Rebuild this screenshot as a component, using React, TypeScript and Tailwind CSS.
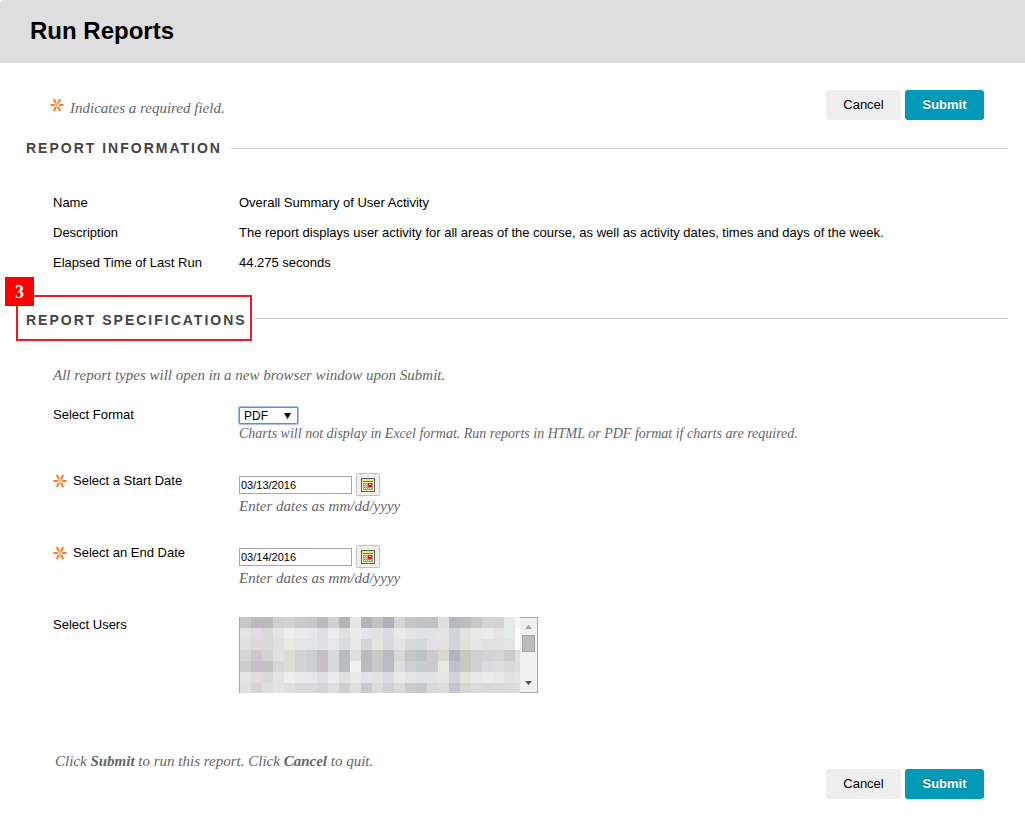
import { ReactNode, useState } from 'react'

// average colour of each 11px block of the blurred user list
const MOSAIC = [
  'c8c8c8 c0b8c0 bababa d0d0d4 d3d3d0 c9cbca c6c8cc bfb7c0 ced2d1 b2b4b6 e6e6e4 b2b4ba c4c3be b0b0ba d4d5d7 c6c6c6 bfc3c6 c1c0c4 e0dfda b4b8c0 bebdb9 c8c8c5 d4d5da d5d3d1 e8ebec f6f6f6',
  'e4e4e4 e2dce2 d9d9d9 e4e4e4 eef0ef ebebe9 e8e9ee e2dde3 ebecee e0e0e0 ebebeb e3e4ea e3e2e0 dadbe0 eaeaea e3e4e5 e0e3e5 e2e2e5 e5e4e4 d3d4da e4e4e0 e9e9e9 ececec e5e5e6 e6ebec ffffff',
  'e0e0e0 ddd9da d9d9d9 e2dfe2 e9eae6 e4e5e4 e3e4e5 e2dfe3 e6e8e8 d9dbdc e9e9e9 d5d5d5 e5e5e2 d9dae0 e5e6e4 d9d9db d5d8d9 e2e0e2 e3e1e1 d1d3d9 e1e2de e6e6e6 e1e1e1 e0e2e1 e5e5e2 fcfcfc',
  'd5d7d6 cdc6ce d2d2d0 e3e1e6 dddeda d0d3d2 cccfd4 c7bfc8 d7d9dc b8bdc0 e0e0dd bbbcc2 cac9c5 b9b9c3 d6d8d6 c6c6c5 bdc2c5 cdcacc d9d9d2 b0b5bf c8c7c2 cfd1ce d3d4da d5d5d6 cacbce e0e0e0',
  'cdcdcd c6bfc7 c2c2c2 d7d7dc dddeda d0d3d2 cccfd4 c7bfc8 d7d9dc b8bdc0 f0f0f0 bbbcc2 cac9c5 b9b9c3 dcdde0 d0ced3 c9cbcf cdcacc e8e8e3 bec1cc c8c7c2 cfd1ce dadbe1 dfdddc d8dad6 dedede',
  'e4e4e4 e2dce2 d9d9d9 e4e4e4 eef0ef ebebe9 e8e9ee e2dde3 ebecee e0e0e0 e9e9e9 e3e4ea e3e2e0 dadbe0 eaeaea e3e4e5 e0e3e5 e2e2e5 e5e4e4 d3d4da e4e4e0 e9e9e9 ececec e9e9e9 e0e3e1 e6e6e6',
  'e0e0e0 d7d5d6 dededc e5e4e4 e0e1de d9dbda d8d9db d9d2da dddedd cecece dfdfdf c9c9c9 dbdbd8 cfd0d6 dbdbdb cacbca c4c8c7 d9d8db dddddb c3c6d1 d7d6d1 dcdcdc d8dad8 dadada dadcd9 dddddd',
].map((row) => row.split(' '))

function Asterisk() {
  return (
    <svg
      width="14"
      height="14"
      viewBox="0 0 14 14"
      stroke="#ff7a24"
      strokeWidth="2"
      fill="none"
      className="shrink-0"
      aria-hidden="true"
    >
      <path d="M0.5 7H4.8M9.2 7H13.5M3.8 1L6 5.2M10.2 1L8 5.2M3.8 13L6 8.8M10.2 13L8 8.8" />
      <path d="M4.8 7L6 5.2L8 8.8M9.2 7L8 5.2L6 8.8" strokeWidth="1" stroke="#ffa468" />
    </svg>
  )
}

function CalendarIcon() {
  return (
    <svg width="14" height="14" viewBox="0 0 14 14" shapeRendering="crispEdges">
      <rect width="14" height="14" fill="#626055" />
      <rect x="1" y="1" width="12" height="12" fill="#fff3bd" />
      <rect x="1" y="1" width="12" height="2" fill="#f8de83" />
      <rect x="2" y="3" width="10" height="1" fill="#77735f" />
      <rect x="2" y="5" width="10" height="7" fill="#a5a18c" />
      {[6, 8, 10].map((y) =>
        [3, 5, 7, 9].map((x) => (
          <rect key={`${x}-${y}`} x={x} y={y} width="1" height="1" fill="#fffbe2" />
        ))
      )}
      <rect x="7" y="5" width="4" height="4" fill="#e0141a" />
      <rect x="8" y="6" width="2" height="1" fill="#ffffff" />
    </svg>
  )
}

function Buttons() {
  return (
    <div className="flex gap-1 text-[13px]">
      <button
        type="button"
        className="h-[30px] w-[75px] rounded-[3px] bg-[#eeeeee] text-black"
      >
        Cancel
      </button>
      <button
        type="submit"
        className="h-[30px] w-[79px] rounded-[3px] bg-[#0099b8] font-bold text-white [text-shadow:0_-1px_0_#00607a]"
      >
        Submit
      </button>
    </div>
  )
}

function Row({
  label,
  htmlFor,
  required,
  children,
}: {
  label: string
  htmlFor: string
  required?: boolean
  children: ReactNode
}) {
  return (
    <div className="flex">
      <div className="flex h-5 w-[186px] shrink-0 items-center gap-[6px]">
        {required && <Asterisk />}
        <label htmlFor={htmlFor}>{label}</label>
      </div>
      <div className="min-w-0 flex-1 pt-[2px]">{children}</div>
    </div>
  )
}

function Hint({ small, children }: { small?: boolean; children: ReactNode }) {
  return (
    <p
      className={`font-['Liberation_Serif'] leading-5 text-[#666666] italic ${
        small ? 'text-sm' : 'text-[15px]'
      }`}
    >
      {children}
    </p>
  )
}

function DateRow({ id, label, value }: { id: string; label: string; value: string }) {
  const [date, setDate] = useState(value)

  return (
    <Row label={label} htmlFor={id} required>
      <div className="flex h-[23px] items-center gap-1">
        <input
          id={id}
          type="text"
          value={date}
          onChange={(e) => setDate(e.target.value)}
          className="h-[18px] w-[113px] border border-[#a5a5a5] px-px text-[11px]"
        />
        <button
          type="button"
          aria-label={`${label} calendar`}
          className="grid h-[23px] w-6 place-content-center rounded-[2px] border border-[#c4c4c4] bg-[#efefef]"
        >
          <CalendarIcon />
        </button>
      </div>
      <Hint>Enter dates as mm/dd/yyyy</Hint>
    </Row>
  )
}

function UserList() {
  return (
    <div className="relative h-[76px] w-[299px] border border-[#a9a9a9]">
      <select
        id="users"
        multiple
        className="block h-full w-full overflow-hidden"
      />
      {/* Blurred names */}
      <svg
        width="280"
        height="76"
        viewBox="0 0 280 76"
        shapeRendering="crispEdges"
        className="pointer-events-none absolute -top-px left-0"
        aria-hidden="true"
      >
        {MOSAIC.map((row, y) =>
          row.map((color, x) => (
            <rect
              key={`${x}-${y}`}
              x={x * 11}
              y={y * 11}
              width="11"
              height="11"
              fill={`#${color}`}
            />
          ))
        )}
      </svg>
      {/* Scrollbar */}
      <div className="pointer-events-none absolute inset-y-0 right-0 flex w-[17px] flex-col items-center bg-[#f1f1f1] py-[7px]">
        <svg width="7" height="4" viewBox="0 0 7 4" fill="#a0a0a0">
          <path d="M0 4L3.5 0L7 4Z" />
        </svg>
        <div className="mt-[6px] h-[17px] w-[13px] border border-[#a8a8a8] bg-[#bcbcbc]" />
        <svg width="7" height="4" viewBox="0 0 7 4" fill="#505050" className="mt-auto">
          <path d="M0 0L3.5 4L7 0Z" />
        </svg>
      </div>
    </div>
  )
}

export default function App() {
  const [format, setFormat] = useState('PDF')

  return (
    <div className="bg-white font-['Liberation_Sans'] text-[13px] leading-5 text-black">
      {/* Header */}
      <header className="flex h-[63px] items-center rounded-tl-[4px] bg-[#dedede] px-[30px] pb-[2px]">
        <h1 className="text-2xl font-bold">Run Reports</h1>
      </header>

      <form onSubmit={(e) => e.preventDefault()}>
        <div className="flex justify-between pt-[27px] pr-[41px] pl-[50px]">
          <div className="flex gap-[6px] pt-2">
            <Asterisk />
            <Hint>Indicates a required field.</Hint>
          </div>
          <Buttons />
        </div>

        {/* Report information */}
        <div className="mt-[18px] flex items-center gap-[9px] pr-[17px] pl-[26px]">
          <h2 className="text-sm leading-5 font-bold tracking-[2px] text-[#444444]">
            REPORT INFORMATION
          </h2>
          <div className="h-px flex-1 bg-[#cccccc]" />
        </div>
        <dl className="mt-[30px] grid grid-cols-[186px_1fr] pl-[53px] leading-[30px]">
          <dt>Name</dt>
          <dd>Overall Summary of User Activity</dd>
          <dt>Description</dt>
          <dd>
            The report displays user activity for all areas of the course, as
            well as activity dates, times and days of the week.
          </dd>
          <dt>Elapsed Time of Last Run</dt>
          <dd>44.275 seconds</dd>
        </dl>

        {/* Report specifications */}
        <div className="mt-[17px] flex items-center gap-[2px] pr-[17px] pl-4">
          <div className="relative border-2 border-[#ed1c24] pt-[13px] pr-[3px] pb-[9px] pl-2">
            <h2 className="text-sm leading-5 font-bold tracking-[2px] text-[#444444]">
              REPORT SPECIFICATIONS
            </h2>
            <span className="absolute -top-5 -left-[13px] grid h-[29px] w-[29px] place-content-center bg-[#ff0000] font-['Liberation_Serif'] text-lg font-bold text-white">
              3
            </span>
          </div>
          <div className="h-px flex-1 bg-[#cccccc]" />
        </div>

        <div className="mt-6 pl-[53px]">
          <Hint>All report types will open in a new browser window upon Submit.</Hint>
          <div className="mt-5 flex flex-col gap-[27px]">
            <Row label="Select Format" htmlFor="format">
              <div className="relative h-[17px] w-[59px]">
                <select
                  id="format"
                  value={format}
                  onChange={(e) => setFormat(e.target.value)}
                  className="block h-full w-full appearance-none rounded-[1px] border border-[#5b8ddc] bg-white pl-1 text-xs leading-[14px] ring-1 ring-[#a9c4f0]"
                >
                  <option>PDF</option>
                  <option>HTML</option>
                  <option>Excel</option>
                </select>
                <svg
                  width="7"
                  height="6"
                  viewBox="0 0 7 6"
                  className="pointer-events-none absolute top-[6px] right-[7px]"
                >
                  <path d="M0 0H7L3.5 6Z" />
                </svg>
              </div>
              <Hint small>
                Charts will not display in Excel format. Run reports in HTML or
                PDF format if charts are required.
              </Hint>
            </Row>
            <DateRow id="start" label="Select a Start Date" value="03/13/2016" />
            <DateRow id="end" label="Select an End Date" value="03/14/2016" />
            <Row label="Select Users" htmlFor="users">
              <UserList />
            </Row>
          </div>
        </div>

        {/* Footer */}
        <div className="mt-[58px] flex justify-between pr-[41px] pl-[55px]">
          <Hint>
            Click <b>Submit</b> to run this report. Click <b>Cancel</b> to quit.
          </Hint>
          <div className="pt-[18px]">
            <Buttons />
          </div>
        </div>
      </form>
    </div>
  )
}
